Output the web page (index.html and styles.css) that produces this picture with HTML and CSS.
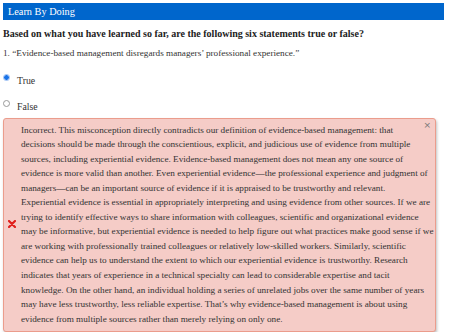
FILE: index.html
```html
<!DOCTYPE html>
<html>
<head>
<meta charset="utf-8">
<link rel="stylesheet" href="styles.css">
</head>
<body>
<div class="page">
  <div class="header">Learn By Doing</div>
  <p class="question">Based on what you have learned so far, are the following six statements true or false?</p>
  <p class="statement">1. “Evidence-based management disregards managers’ professional experience.”</p>
  <div class="options">
    <label class="option"><span class="radio checked"></span><span>True</span></label>
    <label class="option"><span class="radio"></span><span>False</span></label>
  </div>
  <div class="feedback">
    <span class="close">×</span>
    <div class="icon"><svg width="8" height="8" viewBox="0 0 8 8"><path d="M1 1L7 7M7 1L1 7" stroke="#e0201c" stroke-width="2.2" stroke-linecap="round"/></svg></div>
    <p class="fb-text">Incorrect. This misconception directly contradicts our definition of evidence-based management: that<br>decisions should be made through the conscientious, explicit, and judicious use of evidence from multiple<br>sources, including experiential evidence. Evidence-based management does not mean any one source of<br>evidence is more valid than another. Even experiential evidence—the professional experience and judgment of<br>managers—can be an important source of evidence if it is appraised to be trustworthy and relevant.<br>Experiential evidence is essential in appropriately interpreting and using evidence from other sources. If we are<br>trying to identify effective ways to share information with colleagues, scientific and organizational evidence<br>may be informative, but experiential evidence is needed to help figure out what practices make good sense if we<br>are working with professionally trained colleagues or relatively low-skilled workers. Similarly, scientific<br>evidence can help us to understand the extent to which our experiential evidence is trustworthy. Research<br>indicates that years of experience in a technical specialty can lead to considerable expertise and tacit<br>knowledge. On the other hand, an individual holding a series of unrelated jobs over the same number of years<br>may have less trustworthy, less reliable expertise. That’s why evidence-based management is about using<br>evidence from multiple sources rather than merely relying on only one.</p>
  </div>
</div>
</body>
</html>
```
FILE: styles.css
```css
html, body {
  margin: 0;
  padding: 0;
  background: #ffffff;
}
.page {
  padding: 3px 6px 0 3px;
  font-family: "Liberation Serif", "Times New Roman", serif;
  color: #222;
}
.header {
  background: #0066cc;
  color: #fff;
  font-size: 10.3px;
  height: 17px;
  line-height: 17px;
  padding-left: 5px;
}
.question {
  margin: 8px 0 0 0;
  font-size: 10px;
  font-weight: bold;
  color: #222;
}
.statement {
  margin: 9px 0 0 0;
  font-size: 9.2px;
  color: #333;
}
.options {
  display: flex;
  flex-direction: column;
  gap: 15px;
  margin-top: 17px;
}
.option {
  display: flex;
  align-items: center;
  gap: 7px;
  font-size: 9.8px;
  color: #333;
}
.radio {
  width: 7px;
  height: 7px;
  border-radius: 50%;
  border: 1px solid #999;
  box-sizing: border-box;
  position: relative;
  top: -3px;
}
.radio.checked {
  border: none;
  background: radial-gradient(circle, #1a73e8 0 2px, #a9c8f5 2.5px 3.5px, transparent 4px);
}
.feedback {
  margin-top: 6px;
  width: 433px;
  box-sizing: border-box;
  background: #f5ccc7;
  border: 1px solid #eb9c8c;
  border-radius: 3px;
  box-shadow: 1px 2px 3px rgba(0,0,0,0.25);
  display: flex;
  align-items: center;
  padding: 3.5px 8px 4.5px 4px;
  position: relative;
}
.icon {
  width: 8px;
  flex: none;
  display: flex;
  margin-right: 5px;
}
.close {
  position: absolute;
  top: 1px;
  right: 4px;
  font-size: 9px;
  color: #777;
  font-family: "DejaVu Sans", sans-serif;
}
.fb-text {
  margin: 0;
  font-size: 9.2px;
  line-height: 14.54px;
  white-space: nowrap;
  color: #333;
}
```
